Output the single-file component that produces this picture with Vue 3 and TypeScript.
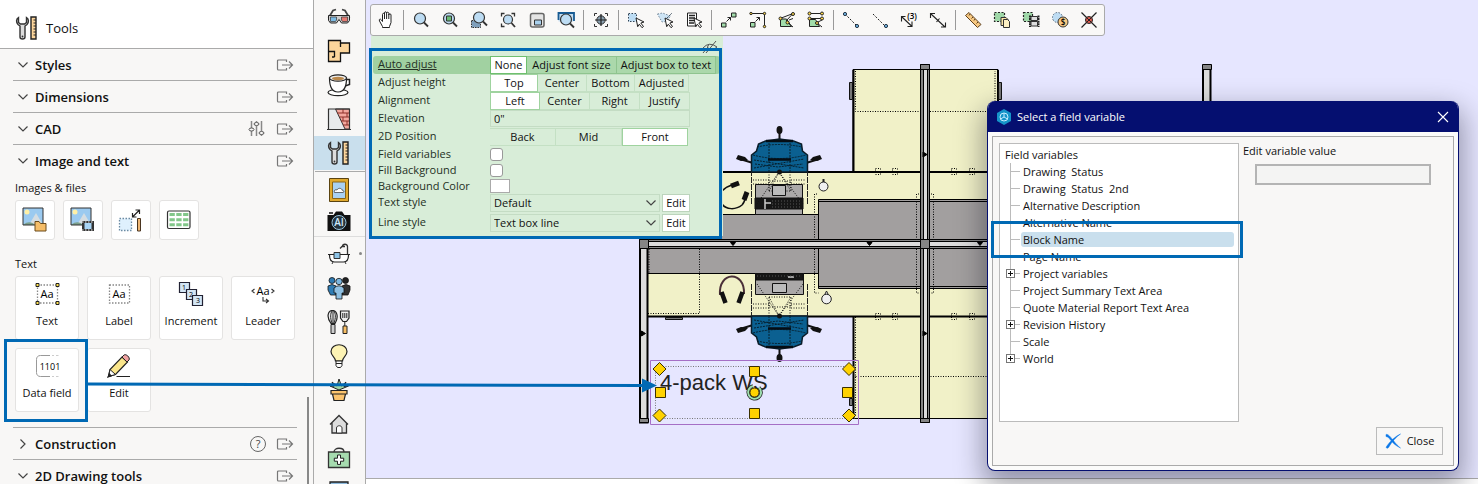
<script setup lang="ts">
import { ref } from 'vue'

interface Glyph { x: number; y: number; size: number; text: string; tint?: string }
interface Tool { id: string; label: string; glyphs?: Glyph[] }
interface Choice { label: string; options: string[]; width: number[]; value: string }

const railTop: Tool[] = [
  { id: 'glasses', label: '3D view' },
  { id: 'plan', label: 'Floor plan' },
  { id: 'cup', label: 'Accessories' },
  { id: 'wall', label: 'Walls' },
  { id: 'tools', label: 'Tools' },
]
const railMiddle: Tool[] = [
  { id: 'picture', label: 'Rendering' },
  { id: 'camera', label: 'AI camera', glyphs: [{ x: 12, y: 17, size: 10, text: 'AI', tint: '#cfe9fa' }] },
]
const railBottom: Tool[] = [
  { id: 'bath', label: 'Bathroom' },
  { id: 'people', label: 'People' },
  { id: 'kitchen', label: 'Kitchen' },
  { id: 'bulb', label: 'Lighting' },
  { id: 'plant', label: 'Plants' },
  { id: 'house', label: 'Building' },
  { id: 'medkit', label: 'Healthcare' },
  { id: 'screen', label: 'Screens' },
]

const imageTools: Tool[] = [
  { id: 'image-folder', label: 'Insert image' },
  { id: 'image-film', label: 'Insert film' },
  { id: 'image-scale', label: 'Scale image' },
  { id: 'sheet', label: 'Insert table' },
]
const textTools: Tool[] = [
  { id: 'text', label: 'Text', glyphs: [{ x: 13, y: 17, size: 11, text: 'Aa' }] },
  { id: 'label', label: 'Label', glyphs: [{ x: 13, y: 17, size: 11, text: 'Aa' }] },
  {
    id: 'increment',
    label: 'Increment',
    glyphs: [
      { x: 6, y: 9, size: 7, text: '1' },
      { x: 13, y: 16, size: 7, text: '2' },
      { x: 20, y: 22, size: 7, text: '3' },
    ],
  },
  { id: 'leader', label: 'Leader', glyphs: [{ x: 13, y: 14, size: 11, text: 'Aa' }] },
  { id: 'datafield', label: 'Data field', glyphs: [{ x: 16, y: 17, size: 9, text: '1101' }] },
  { id: 'pencil', label: 'Edit' },
]

const toolbar: Tool[][] = [
  [{ id: 'hand', label: 'Pan' }],
  [
    { id: 'zoom', label: 'Zoom' },
    { id: 'zoom-in', label: 'Zoom in' },
    { id: 'zoom-sel', label: 'Zoom window' },
    { id: 'zoom-all', label: 'Zoom all' },
    { id: 'zoom-page', label: 'Zoom page' },
    { id: 'zoom-prev', label: 'Previous zoom' },
  ],
  [{ id: 'center', label: 'Center view' }],
  [
    { id: 'select', label: 'Select' },
    { id: 'lasso', label: 'Lasso select' },
    { id: 'select-list', label: 'Select from list' },
  ],
  [
    { id: 'snap-a', label: 'Move' },
    { id: 'snap-b', label: 'Stretch' },
    { id: 'snap-c', label: 'Edit points' },
    { id: 'snap-d', label: 'Edit edges' },
  ],
  [
    { id: 'line', label: 'Line' },
    { id: 'line-mid', label: 'Line midpoint' },
    { id: 'dim-three', label: 'Divide', glyphs: [{ x: 15, y: 11, size: 8, text: '(3)' }] },
    { id: 'dim', label: 'Measure line' },
  ],
  [
    { id: 'ruler', label: 'Ruler' },
    { id: 'copy', label: 'Copy' },
    { id: 'copy-film', label: 'Animate' },
    { id: 'price', label: 'Price', glyphs: [{ x: 15, y: 17, size: 8, text: '$' }] },
    { id: 'cross', label: 'Delete' },
  ],
]

const choices = ref<Choice[]>([
  { label: 'Auto adjust', options: ['None', 'Adjust font size', 'Adjust box to text'], width: [37, 90, 99], value: 'None' },
  { label: 'Adjust height', options: ['Top', 'Center', 'Bottom', 'Adjusted'], width: [48, 49, 48, 54], value: 'Top' },
  { label: 'Alignment', options: ['Left', 'Center', 'Right', 'Justify'], width: [50, 50, 50, 50], value: 'Left' },
])
const position = ref('Front')
const elevation = ref('0"')
const fieldVariables = ref(false)
const fillBackground = ref(false)

const variables = [
  { name: 'Drawing  Status' },
  { name: 'Drawing  Status  2nd' },
  { name: 'Alternative Description' },
  { name: 'Alternative Name' },
  { name: 'Block Name' },
  { name: 'Page Name' },
  { name: 'Project variables', group: true },
  { name: 'Project Summary Text Area' },
  { name: 'Quote Material Report Text Area' },
  { name: 'Revision History', group: true },
  { name: 'Scale' },
  { name: 'World', group: true },
]
const selected = ref('Block Name')
</script>

<template>
  <div class="app">
    <svg class="sprite" aria-hidden="true">
      <symbol id="chevron-down" viewBox="0 0 12 12"><path d="M1.500 3.500 6 8l4.500-4.500" fill="none" stroke="#444" stroke-width="1.200" /></symbol>
      <symbol id="chevron-right" viewBox="0 0 12 12"><path d="M3.500 1.500 8 6l-4.500 4.500" fill="none" stroke="#444" stroke-width="1.200" /></symbol>
      <symbol id="export" viewBox="0 0 18 14"><path d="M10.500 4V2H2.500q-1 0-1 1v8q0 1 1 1h8v-2M6 7h10.500M13 3.500 16.500 7 13 10.500" fill="none" stroke="#777" stroke-width="1.200" /></symbol>
      <symbol id="sliders" viewBox="0 0 18 16"><path d="M3.500 0v7M3.500 10v5M8.500 0v1M8.500 5v10M13.500 0v10M13.500 13.500v1.500" stroke="#888" stroke-width="1.500" /><g fill="#f8f7f6" stroke="#555"><ellipse cx="3.500" cy="8.500" rx="2.500" ry="1.500" /><ellipse cx="8.500" cy="3" rx="2.500" ry="1.500" /><ellipse cx="13.500" cy="12" rx="2.500" ry="1.500" /></g></symbol>

      <symbol id="tools" viewBox="0 0 24 24">
        <path d="M3.500 1.500C1 3 1 6.500 3 8.500l2 1.500v11c0 2.600 5 2.600 5 0V10l2-1.500c2-2 2-5.500-.5-7v5L9.500 8h-4l-2-1.500z" fill="#ddd" stroke="#333" stroke-width="1.400" />
        <circle cx="7.500" cy="20.500" r=".9" fill="#333" />
        <path d="M16 1h5v22h-5z" fill="#fcd59b" stroke="#222" stroke-width="1.400" />
        <path d="M18.500 4H21M18.500 7H21M18.500 10H21M18.500 13H21M18.500 16H21M18.500 19H21" stroke="#222" />
      </symbol>
      <symbol id="glasses" viewBox="0 0 24 24"><path d="M1.500 13 6 5.500l3-1M22.500 13 18 5.500l-3-1" fill="none" stroke="#444" stroke-width="1.800" /><path d="M1.500 10.500h21v5l-2 2.500h-6L12 14.500 9.500 18h-6l-2-2.500z" fill="#ccc" stroke="#222" /><path d="M3.500 12h6v3l-1 1.500h-5z" fill="#7cbbe5" stroke="#333" stroke-width=".7" /><path d="M14.500 12h6v4.500h-5l-1-1.500z" fill="#e57a72" stroke="#333" stroke-width=".7" /></symbol>
      <symbol id="plan" viewBox="0 0 24 24"><path d="M1.500 1.500h12v2.500H22.500v10h-9V22.500h-12z" fill="#fcd59b" stroke="#111" stroke-width="1.300" /><path d="M13.500 4v4M7.500 18v-5.500h-6M7.500 18H5" fill="none" stroke="#111" stroke-width="1.300" /></symbol>
      <symbol id="cup" viewBox="0 0 24 24"><ellipse cx="11" cy="19.500" rx="10" ry="3.200" fill="#fff" stroke="#222" stroke-width="1.200" /><path d="M18 6.500h4.500v5L18 13" fill="#fff" stroke="#222" stroke-width="1.500" /><path d="M2.500 5c0 7 1 14 8.500 14s8.500-7 8.500-14z" fill="#fff" stroke="#222" stroke-width="1.200" /><ellipse cx="11" cy="5" rx="8.500" ry="3.200" fill="#eee" stroke="#222" stroke-width="1.200" /><ellipse cx="11" cy="5.500" rx="6" ry="1.800" fill="#bb894c" /></symbol>
      <symbol id="wall" viewBox="0 0 24 24"><path d="M1.500 2H9l9.500 20H1.500z" fill="#e8eaec" /><path d="M8.500 2h14v20h-4.500z" fill="#f3a89e" stroke="#333" /><path d="M10 6h12.500M12.500 10h10M14 14h8.500M16 18h6.500M16 2v4M20 6v4M16 10v4M20 14v4" stroke="#8d2f28" /><path d="M1.500 22V2h21v20M0 22.500h24" fill="none" stroke="#333" stroke-width="1.200" /></symbol>
      <symbol id="picture" viewBox="0 0 24 24"><path d="M2.500.5h19v23h-19z" fill="#e0a92e" stroke="#5a4310" /><path d="M5.500 4h13v16.500h-13z" fill="#a9d1f3" stroke="#8a6516" /><path d="M7.500 14.500c-1-2 1-3.500 2.500-2.500 1-2.500 5-2 5 .2 2-.2 2.500 2.300 1 2.300z" fill="#fff" stroke="#333" stroke-width=".7" /></symbol>
      <symbol id="camera" viewBox="0 0 24 24"><path d="M.5 6h6l2.500-3.500h6L17.500 6h6v16H.5z" fill="#111" /><path d="M2 4h4" stroke="#111" stroke-width="1.500" /><circle cx="12" cy="13.500" r="7" fill="#26343d" stroke="#9ac6df" /></symbol>
      <symbol id="bath" viewBox="0 0 24 24"><path d="M20.500 13V4.500c0-3-5-3-5 0M13 6.500l2-2h3" fill="none" stroke="#333" stroke-width="1.300" /><path d="M1 12.500h22M2.500 13c0 5 1.500 7 5 7h9c3.500 0 5-2 5-7" fill="#fff" stroke="#222" stroke-width="1.200" /><path d="M7 10.500h6v6H7z" fill="#8dc4e8" stroke="#333" /><path d="M6 20l-1 2M18 20l1 2" stroke="#333" /></symbol>
      <symbol id="people" viewBox="0 0 24 24"><g stroke="#111" stroke-width=".8"><circle cx="5" cy="4.500" r="3" fill="#2f7cb4" /><path d="M1 10q4-3 8 0v9H3.500L1 14z" fill="#2f7cb4" /><circle cx="18.500" cy="4.500" r="3" fill="#222" /><path d="M15 10q4-3 8 0v4l-2 5h-6z" fill="#333" /><circle cx="12" cy="5.500" r="3.200" fill="#7cb6de" /><path d="M7 12q5-4.500 10 0v5h-2v6H9v-6H7z" fill="#8fc0e2" /></g></symbol>
      <symbol id="kitchen" viewBox="0 0 24 24"><path d="M4 13.500C-1 7 1 .5 5.500.5S12 7 8 13.500z" fill="#eee" stroke="#222" stroke-width="1.200" /><path d="M5 13C3 8 3.500 3 5 1M7 13c2-5 1.500-10 0-12M6 1v12" fill="none" stroke="#222" /><path d="M4 14.500h4v9H4z" fill="#ccc" stroke="#222" /><path d="M13.500 1h8.500v7l-2.500 3.500h-3.500L13.500 8z" fill="#eee" stroke="#222" stroke-width="1.200" /><path d="M15.800 3v5M17.800 3v5M19.800 3v5M17.800 11v5" stroke="#222" /><path d="M16 16h4v7.500h-4z" fill="#f6bd63" stroke="#222" /></symbol>
      <symbol id="bulb" viewBox="0 0 24 24"><path d="M8.500 17c0-4-4.500-5-4.500-9.500C4-1.500 20-1.500 20 7.500c0 4.500-4.500 5.500-4.500 9.500z" fill="#fdf3b4" stroke="#222" stroke-width="1.200" /><path d="M9 17h6v4.500l-1.500 2h-3L9 21.500zM9 19.500h6" fill="#fff" stroke="#222" /></symbol>
      <symbol id="plant" viewBox="0 0 24 24"><path d="M12 12 3 8l4 .2L5 4l5 4 2-7 2.500 7L19 4l-2 4.500 4.500-.5z" fill="#9ed5a5" stroke="#222" /><path d="M4 12.500h16V16H4zM5.500 16h13L17 22.500H7z" fill="#fbc36d" stroke="#222" stroke-width="1.200" /></symbol>
      <symbol id="house" viewBox="0 0 24 24"><path d="M4.500 21V11.500L12 4l7.500 7.500V21z" fill="#ddd" /><path d="M3 12.500 12 3.500l9 9M5 11v10h14.500V11" fill="none" stroke="#333" stroke-width="1.300" /><path d="M9.500 21v-5c0-3 5.500-3 5.500 0v5z" fill="#fff" stroke="#333" /></symbol>
      <symbol id="medkit" viewBox="0 0 24 24"><path d="M7 6c0-5 10-5 10 0" fill="none" stroke="#333" stroke-width="1.300" /><path d="M1.500 6h21v15.500h-21z" fill="#a6dbaf" stroke="#333" stroke-width="1.300" /><path d="M10.500 9h3v3.200h3.200v3h-3.200v3.200h-3v-3.200H7.300v-3h3.200z" fill="#fff" stroke="#222" /></symbol>
      <symbol id="screen" viewBox="0 0 24 24"><path d="M3 2h18v16H3z" fill="#8db9dc" stroke="#222" stroke-width="1.300" /></symbol>

      <symbol id="landscape" viewBox="0 0 24 24"><path d="M1 1h20v17H1z" fill="#9bcaf0" /><path d="M7 18 14 6l7 12z" fill="#d5dde2" /><path d="M1 18c5-4 9-3 12 0z" fill="#7b9f8b" /><circle cx="5" cy="5" r="2.500" fill="#fff0a5" /><path d="M1 1h20v17H1z" fill="none" stroke="#333" /></symbol>
      <symbol id="image-folder" viewBox="0 0 26 26"><use href="#landscape" width="24" height="24" /><path d="M13 14.500h4l1.500 2H24V24H13z" fill="#f5bd68" stroke="#6b4b1b" /></symbol>
      <symbol id="image-film" viewBox="0 0 26 26"><use href="#landscape" width="24" height="24" /><path d="M12 14h12v10H12z" fill="#333" /><path d="M14.500 16h7v6h-7z" fill="#a9d5f5" /><path d="M12 15h12M12 23h12" stroke="#eee" stroke-dasharray="1.500 1.500" /></symbol>
      <symbol id="image-scale" viewBox="0 0 26 26"><path d="M1.500 11.500h12v12h-12z" fill="#dff0fd" stroke="#6d8ba3" stroke-dasharray="1.500 1.500" stroke-width="1.300" /><path d="m15 9.500 6-6M17.500 3H21.500V7M14.500 6V10H18.500" fill="none" stroke="#222" stroke-width="1.200" /><path d="M19.500 11.500h3v12.500h-3z" fill="#f0b876" stroke="#4a3520" /></symbol>
      <symbol id="sheet" viewBox="0 0 26 26"><rect x="1.500" y="4" width="22.500" height="17.500" rx="1.500" fill="#fff" stroke="#333" stroke-width="1.200" /><path d="M3.500 7.500h19M3.500 12.700h19M3.500 17.800h19" stroke="#83c78a" stroke-width="3" stroke-dasharray="5.300 1.500" /></symbol>
      <symbol id="text" viewBox="0 0 26 26"><path d="M3.500 4h20v18h-20z" fill="none" stroke="#888" stroke-dasharray="1.500 1.500" stroke-width="1.300" /><path d="M2 2.500h3v3H2zM22 2.500h3v3h-3zM2 20.500h3v3H2zM22 20.500h3v3h-3z" fill="#ffe14d" stroke="#222" /></symbol>
      <symbol id="label" viewBox="0 0 26 26"><path d="M3.500 4h20v18h-20z" fill="none" stroke="#888" stroke-dasharray="1.500 1.500" stroke-width="1.300" /></symbol>
      <symbol id="increment" viewBox="0 0 26 26"><g fill="#d3e6f5" stroke="#223" stroke-width="1.200"><path d="M1.500 1.500h10v10h-10z" /><path d="M8.500 8.500h10v10h-10z" /><path d="M14.500 14.500h10v10h-10z" /></g></symbol>
      <symbol id="leader" viewBox="0 0 26 26"><path d="M4.500 8 2 10l2.500 2M21.500 8 24 10l-2.500 2" fill="none" stroke="#333" stroke-width="1.100" /><path d="M13 16v4h5M16 18l2.500 2-2.500 2" fill="none" stroke="#333" stroke-width="1.100" /></symbol>
      <symbol id="datafield" viewBox="0 0 26 26"><path d="M16 2.500H6.500C4 2.500 2.500 4 2.500 6.500v13c0 2.500 1.500 4 4 4H16" fill="none" stroke="#999" /><path d="M18 2.500h2M22 2.500h2.500M18 23.500h2M22 23.500h2.500" stroke="#ccc" /></symbol>
      <symbol id="pencil" viewBox="0 0 26 26"><path d="m2.500 23.500 1.500-7L16 4l5.500 5L9.500 21.500z" fill="#fbe68b" stroke="#222" stroke-width="1.200" /><path d="m16 4 2-2c2-1.500 6.500 2.500 5 5l-2 2z" fill="#f2a3a3" stroke="#222" /><path d="m2.500 23.500 1.500-7 5.500 5z" fill="#fff" stroke="#222" /><path d="m2 24 1.500-3 1.500 2zM10.500 23.500H24" fill="#222" stroke="#222" stroke-width="1.200" /></symbol>

      <symbol id="hand" viewBox="0 0 24 24"><path d="M8.500 18.500 5.500 13c-1-2 1-2.500 2-1l1 1.500V6.500c0-1.600 2-1.600 2 0V5c0-1.700 2-1.700 2 0v.5c0-1.700 2.300-1.700 2.300 0V7c0-1.600 2.200-1.600 2.200 0v7.500l-1.500 4v1h-7z" fill="#fff" stroke="#222" /><path d="M10.500 6v5M12.600 5.500V11M14.800 6.500V11" stroke="#222" /></symbol>
      <symbol id="lens" viewBox="0 0 24 24"><circle cx="11" cy="10.500" r="5.500" fill="#bddcf3" stroke="#333" stroke-width="1.200" /><path d="m15 14.500 4 4" stroke="#333" stroke-width="1.800" /></symbol>
      <symbol id="zoom" viewBox="0 0 24 24"><use href="#lens" width="24" height="24" /></symbol>
      <symbol id="zoom-in" viewBox="0 0 24 24"><use href="#lens" width="24" height="24" /><path d="M8.500 8h5v5h-5z" fill="#6bbd75" stroke="#333" /></symbol>
      <symbol id="zoom-sel" viewBox="0 0 24 24"><path d="M4.500 12.500h9v7h-9z" fill="#7f9fbb" stroke="#333" stroke-dasharray="1.500 1" /><use href="#lens" x="1" y="-1" width="24" height="24" /></symbol>
      <symbol id="zoom-all" viewBox="0 0 24 24"><circle cx="12" cy="11.500" r="4.500" fill="#bddcf3" stroke="#333" stroke-width="1.200" /><path d="m15.500 15 3.500 4" stroke="#333" stroke-width="1.800" /><path d="M5.500 8.500v-3h3M15.500 5.500h3v3M5.500 15.500v3h3" fill="none" stroke="#333" stroke-width="1.300" /></symbol>
      <symbol id="zoom-page" viewBox="0 0 24 24"><rect x="5.500" y="5.500" width="13.500" height="13.500" rx="2" fill="#e4e4e4" stroke="#666" stroke-width="1.500" /><path d="M9.500 12h7v5h-7z" fill="#a9d0ed" stroke="#333" /></symbol>
      <symbol id="zoom-prev" viewBox="0 0 24 24"><path d="M4.500 5.500h15v8h-15z" fill="#c4ddf0" /><path d="M4.500 12V5h15.500v8" fill="none" stroke="#185b93" stroke-width="1.800" /><use href="#lens" x="1" y="1" width="24" height="24" /></symbol>
      <symbol id="center" viewBox="0 0 24 24"><circle cx="12" cy="12" r="4.200" fill="#8aa0b0" stroke="#333" /><path d="M12 6v12M6 12h12" stroke="#222" stroke-width="1.200" /><path d="M5.500 8V5.500H8M16 5.500h2.500V8M5.500 16v2.500H8M16 18.500h2.500V16" fill="none" stroke="#333" /></symbol>
      <symbol id="pointer" viewBox="0 0 24 24"><path d="m12 10 8 4-3.200 1 2.700 3.500-1.500 1.200-2.700-3.500-1.600 2.500z" fill="#fff" stroke="#222" /></symbol>
      <symbol id="select" viewBox="0 0 24 24"><path d="M4.500 5.500h8v8h-8z" fill="#bcdcf4" stroke="#345" stroke-dasharray="1.500 1.500" /><use href="#pointer" width="24" height="24" /></symbol>
      <symbol id="lasso" viewBox="0 0 24 24"><path d="m4.500 6 5-1 8 3-4.500 5.500-4 .5z" fill="#cde4f5" stroke="#789" stroke-dasharray="1.500 1.500" /><path d="m12 12 7-7" stroke="#345" stroke-dasharray="2 1" /><use href="#pointer" width="24" height="24" /></symbol>
      <symbol id="select-list" viewBox="0 0 24 24"><path d="M5.500 5h9v13h-9z" fill="#fff" stroke="#222" /><path d="M7 7.500h6M7 10h6M7 12.500h5M7 15h5" stroke="#222" stroke-width="1.500" /><use href="#pointer" width="24" height="24" /></symbol>
      <symbol id="snap-a" viewBox="0 0 24 24"><path d="M4.500 15h4.500v4H4.500zM14.500 5H19v4h-4.500z" fill="#a1dcaa" stroke="#222" /><path d="m9.500 13.500 4-4M10.500 9.500h3v3" fill="none" stroke="#222" /></symbol>
      <symbol id="snap-b" viewBox="0 0 24 24"><path d="M4.500 5.500h14v13" fill="none" stroke="#222" /><path d="M4.500 14.500h4.500v4.500H4.500z" fill="#a1dcaa" stroke="#222" /><path d="m9.500 13.500 4-4M10.500 9.500h3v3" fill="none" stroke="#222" /><g fill="#ffd84a" stroke="#222"><circle cx="5" cy="5.500" r="1.200" /><circle cx="18.500" cy="5.500" r="1.200" /><circle cx="18.500" cy="18.500" r="1.200" /></g></symbol>
      <symbol id="snap-c" viewBox="0 0 24 24"><path d="M5.500 11h6l2 3 3 4.500H5.500z" fill="#a1dcaa" stroke="#222" /><path d="m5 10.500 13-5-7 7.500M13 15l5 4M14 12l4-1.500" fill="none" stroke="#222" /><g fill="#ffd84a" stroke="#222"><circle cx="5.500" cy="10.500" r="1.500" /><circle cx="18" cy="6" r="1.500" /><circle cx="12.500" cy="14.500" r="1.500" /></g></symbol>
      <symbol id="snap-d" viewBox="0 0 24 24"><path d="M5.500 11.500h6l4 7h-10z" fill="#a1dcaa" stroke="#222" /><path d="M6 5.500h12M6 10.500h12M13 15l5 4M14 14l4-2" fill="none" stroke="#222" /><g fill="#ffd84a" stroke="#222"><circle cx="5.500" cy="5.500" r="1.500" /><circle cx="18" cy="5.500" r="1.500" /><circle cx="5.500" cy="10.500" r="1.500" /><circle cx="18" cy="10.500" r="1.500" /><circle cx="13" cy="15" r="1.500" /></g></symbol>
      <symbol id="line" viewBox="0 0 24 24"><path d="m6 6 12 12" stroke="#222" stroke-dasharray="2 1.500" /><g fill="#73b6e4" stroke="#234"><circle cx="6" cy="6" r="1.600" /><circle cx="18" cy="18" r="1.600" /></g></symbol>
      <symbol id="line-mid" viewBox="0 0 24 24"><path d="m5 6 12 12" stroke="#222" stroke-dasharray="2 1.500" /><circle cx="18" cy="18" r="1.600" fill="#73b6e4" stroke="#234" /></symbol>
      <symbol id="dim-three" viewBox="0 0 24 24"><path d="m5 9 9.500 9M4.500 13.500V8.500h4M10.500 18.500h4.500v-5" fill="none" stroke="#222" stroke-width="1.100" /></symbol>
      <symbol id="dim" viewBox="0 0 24 24"><path d="m5 6 14 13M4.500 10V5.500H9M15 19h4.500v-4.500M10.500 14l3-3.500" fill="none" stroke="#222" stroke-width="1.100" /></symbol>
      <symbol id="ruler" viewBox="0 0 24 24"><path d="m4.500 7.500 3.500-3 12 12-3.500 3z" fill="#f8c982" stroke="#5c3f1d" /><path d="m9 6-1 1.500M12 9l-1.500 1.500M14 11l-1 1.500M17 14l-1.500 1.500" stroke="#5c3f1d" /></symbol>
      <symbol id="copy" viewBox="0 0 24 24"><path d="M4.500 4.500h10v9h-10z" fill="#9fd8a8" stroke="#222" stroke-dasharray="2 1.500" stroke-width="1.200" /><path d="M11 9.500h5l2 2v6h-7z" fill="#fbe6a9" stroke="#333" /><path d="M13.500 11.500h4l2 2v6h-6z" fill="#fdf0c4" stroke="#333" /></symbol>
      <symbol id="copy-film" viewBox="0 0 24 24"><path d="M4.500 4.500h9v9h-9z" fill="#9fd8a8" stroke="#222" stroke-dasharray="2 1.500" stroke-width="1.200" /><path d="M11 7.500v11.500M19.500 7.500v11.500" stroke="#222" stroke-width="2" stroke-dasharray="2 .6" /><path d="M12 8.500h6.500v4H12zM12 13.500h6.500V18H12z" fill="#ddd" stroke="#333" /></symbol>
      <symbol id="price" viewBox="0 0 24 24"><circle cx="9.500" cy="9.500" r="5" fill="#bddcf3" stroke="#567" stroke-dasharray="1.500 1.500" /><circle cx="15" cy="14" r="5" fill="#f8c982" stroke="#333" /></symbol>
      <symbol id="cross" viewBox="0 0 24 24"><path d="m4.500 4.500 15 15M19.500 4.500l-15 15" stroke="#222" stroke-width="1.200" /><circle cx="12" cy="12" r="3.500" fill="#dc5a4e" stroke="#222" /><path d="m9.500 9.500 5 5M14.500 9.500l-5 5" stroke="#222" /></symbol>

      <symbol id="chair" viewBox="735 300 92 64" overflow="visible">
        <path d="M753 325 740 329M806 325l13 4" stroke="#111" stroke-width="2" />
        <path d="m736 329 5-2 7 1-3 3-7 2zM822 329l-5-2-7 1 3 3 7 2z" fill="#111" />
        <path d="M779.500 347v11" stroke="#111" stroke-width="2" />
        <ellipse cx="779.500" cy="358" rx="3" ry="4" fill="#111" />
        <path d="M751.500 316h56v17l-5 4-1 7-8 3-14 2-14-2-7-3-2-7-5-4z" fill="#0b6091" stroke="#0b1c28" stroke-width="1.500" />
        <path d="M753 333q26-7 53 0M757 341q22 5 45 0M755 324l23-3 25 3M769 316v32M790 316v32M754 328l50-8M754 320l50 9" fill="none" stroke="#06202f" stroke-dasharray="2 1" />
        <path d="M768 328.500h23M766 347h27" stroke="#050d14" stroke-width="2.500" />
        <path d="M751.500 284v32M807.500 284v32" stroke="#222" stroke-dasharray="6 1" />
        <path d="m757 284 22 32 24-32M769 297h22v10h-22zM769 297l10 19 12-19M753 304h16M791 304h15M753 308h16M791 308h15M769 316v-15M790 316v-15" fill="none" stroke="#111" stroke-dasharray="1 1.500" />
        <circle cx="779.500" cy="316" r="2.500" fill="#111" />
      </symbol>
    </svg>

    <aside class="panel">
      <header class="panel-head">
        <svg class="i24"><use href="#tools" /></svg>
        <span>Tools</span>
      </header>
      <div class="panel-body">
        <section v-for="name in ['Styles', 'Dimensions', 'CAD']" :key="name" class="section ruled">
          <button class="fold"><svg class="i12"><use href="#chevron-down" /></svg>{{ name }}</button>
          <button v-if="name === 'CAD'" class="act" aria-label="CAD settings"><svg class="i-sliders"><use href="#sliders" /></svg></button>
          <button class="act" :aria-label="'Detach ' + name"><svg class="i-export"><use href="#export" /></svg></button>
        </section>
        <section class="section">
          <button class="fold"><svg class="i12"><use href="#chevron-down" /></svg>Image and text</button>
          <button class="act" aria-label="Detach Image and text"><svg class="i-export"><use href="#export" /></svg></button>
        </section>
        <div class="group">
          <h3>Images &amp; files</h3>
          <div class="tiles small">
            <button v-for="t in imageTools" :key="t.id" class="tile" :aria-label="t.label"><svg class="i26"><use :href="'#' + t.id" /></svg></button>
          </div>
          <h3 class="second">Text</h3>
          <div class="tiles">
            <button v-for="t in textTools" :key="t.id" class="tile">
              <svg class="i26" aria-hidden="true">
                <use :href="'#' + t.id" />
                <text v-for="g in t.glyphs" :key="g.text" class="glyph" :x="g.x" :y="g.y" :font-size="g.size">{{ g.text }}</text>
              </svg>
              <span>{{ t.label }}</span>
            </button>
          </div>
        </div>
        <section class="section ruled">
          <button class="fold"><svg class="i12"><use href="#chevron-right" /></svg>Construction</button>
          <button class="help" aria-label="Help">?</button>
          <button class="act" aria-label="Detach Construction"><svg class="i-export"><use href="#export" /></svg></button>
        </section>
        <section class="section">
          <button class="fold"><svg class="i12"><use href="#chevron-down" /></svg>2D Drawing tools</button>
          <button class="act" aria-label="Detach 2D Drawing tools"><svg class="i-export"><use href="#export" /></svg></button>
        </section>
        <div class="scroll-thumb"></div>
      </div>
    </aside>

    <nav class="rail">
      <button v-for="t in railTop" :key="t.id" :class="{ on: t.id === 'tools' }" :aria-label="t.label"><svg class="i24"><use :href="'#' + t.id" /></svg></button>
      <hr>
      <button v-for="t in railMiddle" :key="t.id" class="short" :aria-label="t.label">
        <svg class="i24">
          <use :href="'#' + t.id" />
          <text v-for="g in t.glyphs" :key="g.text" class="glyph strong" :x="g.x" :y="g.y" :font-size="g.size" :fill="g.tint">{{ g.text }}</text>
        </svg>
      </button>
      <div class="rail-more">
        <button v-for="t in railBottom" :key="t.id" :aria-label="t.label"><svg class="i24"><use :href="'#' + t.id" /></svg><i v-if="t.id === 'bath'" class="dot"></i></button>
      </div>
    </nav>

    <main class="canvas">
      <svg class="drawing" width="1112" height="484" viewBox="366 0 1112 484" role="img" aria-label="Workstation floor plan">
        <g fill="#f1f1c8">
          <path d="M853 69.500h145V172H853zM643 172h355v68H643zM648 248h350v68H648zM853 316h145v102.500H853z" />
        </g>
        <g fill="#a29f9f">
          <path d="M643 214.500h175V240H643zM818.500 199.500H998V240H818.500zM648 248h170.500v25.500H648zM818.500 248H998v40.500H818.500z" />
        </g>
        <g fill="none" stroke="#000">
          <path d="M853 172V69.500h145V172M818.500 240v-40.500H998M818.500 201.500H998M643 214.500h175M648 273.500h170.500v-25M818.500 273v15.500H998M818.500 286.500H998M853 418.500h145" />
          <path d="M643 172h355M648 316.500h350M853.500 70v102M853.500 316v103M998 70v102" stroke-width="2" />
          <path d="M855.500 71v40.500H995V71M855.500 376.500H998M855.500 317v100M649 249v24M699.500 249v64.500H648M814.500 249v44h4M916.500 249v44h4M933.500 249v44h-4M814.500 240v-46h4M916.500 240v-46h4M933.500 240v-46h-4" stroke-dasharray="1 1.500" />
          <path d="M875.500 168.500h5v6h-5zM892.500 168.500h5v6h-5zM951.500 168.500h5v6h-5zM969.500 168.500h5v6h-5zM875.500 313.500h5v6h-5zM892.500 313.500h5v6h-5zM951.500 313.500h5v6h-5zM969.500 313.500h5v6h-5z" stroke-dasharray="1 1.500" />
        </g>
        <g fill="#777" stroke="#111">
          <path d="M849.500 82.500h3v17h-3zM998.500 82.500h3v17h-3zM665.500 317.500h17v2h-17zM849.500 398.500h3v7h-3z" />
        </g>

        <g fill="none" stroke="#111">
          <path d="M722 191c3-3 6-5 10-6M722 204c4 6 14 6 20 1 2-2 3-4 3-8" stroke-width="1.500" />
          <path d="m731 186 8-3M744 200l3-8" stroke-width="5" />
          <path d="M720 295c-2-24 25-25 24-1" stroke="#4a3038" stroke-width="2" />
          <path d="m721.500 292 4 11M742.500 292l-4 11" stroke-width="4.500" />
        </g>
        <g fill="#f0f0f0" stroke="#222">
          <path d="M823.500 179v4" stroke-width="2" /><circle cx="823.500" cy="186.500" r="4.500" />
          <path d="m826.500 291 2 4h-4z" /><circle cx="826.500" cy="299" r="4.800" />
        </g>

        <g stroke="#111">
          <path d="M755.500 184.500h47v30h-47zM755.500 273.500h48v21h-48z" fill="#aaa8a8" />
          <path d="M755 198h48v11h-48zM756 273.500h47v6.500h-47z" fill="#161616" />
          <path d="M765 199v10M765 203h6M788 277h6" stroke="#ccc" stroke-width="1.500" />
          <path d="M772 201h29M772 204h29M772 207h29M757 276h44" stroke="#555" stroke-dasharray="1 2" />
        </g>
        <use href="#chair" x="735" y="300" width="92" height="64" />
        <use href="#chair" x="735" y="300" width="92" height="64" transform="matrix(1 0 0 -1 0 488)" />
        <path d="M772.500 185.500h13v10h-13zM772.500 283.500h14v9h-14z" fill="#bbb" stroke="#111" />

        <g stroke="#000">
          <path d="M643 239.500h355v9H643z" fill="#858585" />
          <path d="M643 241.500h355v5H643z" fill="#dcdcdc" />
          <path d="M920.500 64.500h9v358h-9z" fill="#858585" />
          <path d="M923.500 69.500h4v349h-4z" fill="#dcdcdc" />
          <path d="M640 240h7.500v182.500H640z" fill="#dcdcdc" stroke-width="2" />
          <path d="M1203 69h7.500v45h-7.500z" fill="#dcdcdc" stroke-width="2" />
          <path d="M639.500 239.500h9v9h-9zM639.500 418.500h9v4h-9zM920.500 64.500h9v5h-9zM920.500 239.500h9v9h-9zM920.500 418.500h9v4h-9zM1202.500 64.500h9v5h-9z" fill="#858585" />
          <path d="M730.500 242.500h5l-2.500 3zM867 242.500h5l-2.500 3zM977.500 242.500h5l-2.500 3zM923 152l4 2.500-4 2.500zM923 331l4 2.500-4 2.500zM641.500 331l4 2.500-4 2.500z" />
        </g>

        <path d="M650.500 360.500h208v64h-208z" fill="none" stroke="#a56fc6" />
        <path d="M655.500 366.500h199v52h-199z" fill="none" stroke="#777" stroke-dasharray="1 1.500" />
        <text x="660" y="390" font-family="Liberation Sans, Arial, sans-serif" font-size="22" fill="#222">4-pack WS</text>
        <path d="M759 387.500a6.500 6.500 0 1 1-6-1.500" fill="none" stroke="#222" stroke-width="3.500" />
        <path d="M759 387.500a6.500 6.500 0 1 1-6-1.500" fill="none" stroke="#9fe0b0" stroke-width="2" />
        <g fill="#ffd200" stroke="#3a3000">
          <path d="m659.500 362.500 6.500 6.500-6.500 6.500L653 369zM849 362.500l6.500 6.500-6.500 6.500-6.500-6.500zM659.500 409l6.500 6.500-6.500 6.500-6.500-6.500zM849 409l6.500 6.500-6.500 6.500-6.500-6.500z" />
          <path d="M749.500 366.500h10v10h-10zM655.500 387.500h10v10h-10zM842.500 387.500h10v10h-10zM749.500 408.500h10v10h-10z" />
          <circle cx="754.500" cy="392.500" r="4.500" />
        </g>
      </svg>

      <div class="statusbar"></div>

      <div class="overlay">
        <div class="toolbar" role="toolbar" aria-label="View tools">
          <template v-for="(group, gi) in toolbar" :key="gi">
            <span v-if="gi" class="sep"></span>
            <button v-for="t in group" :key="t.id" :aria-label="t.label">
              <svg class="i24">
                <use :href="'#' + t.id" />
                <text v-for="g in t.glyphs" :key="g.text" class="glyph strong" :x="g.x" :y="g.y" :font-size="g.size">{{ g.text }}</text>
              </svg>
            </button>
          </template>
        </div>

        <form class="props" @submit.prevent>
          <div class="props-top">
            <button type="button" aria-label="Hide properties">
              <svg width="18" height="14" viewBox="0 0 18 14"><path d="M2 8q6-7 14-1-6 6-14 1M8 4q-3 3 0 6M5 13 15 1M2 13 7 7" fill="none" stroke="#555" /></svg>
            </button>
          </div>
          <div v-for="(c, i) in choices" :key="c.label" class="row" :class="{ active: i === 0 }">
            <span class="name">{{ c.label }}</span>
            <button v-for="(o, k) in c.options" :key="o" type="button" class="seg" :class="{ on: c.value === o }" :style="{ width: c.width[k] + 'px' }" :aria-pressed="c.value === o" @click="c.value = o">{{ o }}</button>
          </div>
          <div class="row">
            <label class="name" for="elevation">Elevation</label>
            <input id="elevation" v-model="elevation" class="field" type="text">
          </div>
          <div class="row">
            <span class="name">2D Position</span>
            <button v-for="o in ['Back', 'Mid', 'Front']" :key="o" type="button" class="seg third" :class="{ on: position === o }" :aria-pressed="position === o" @click="position = o">{{ o }}</button>
          </div>
          <div class="row low">
            <label class="name" for="field-vars">Field variables</label>
            <input id="field-vars" v-model="fieldVariables" class="check" type="checkbox">
          </div>
          <div class="row low">
            <label class="name" for="fill-bg">Fill Background</label>
            <input id="fill-bg" v-model="fillBackground" class="check" type="checkbox">
          </div>
          <div class="row low">
            <span class="name">Background Color</span>
            <button type="button" class="swatch" aria-label="Background Color"></button>
          </div>
          <div class="row pick">
            <label class="name" for="text-style">Text style</label>
            <span class="combo"><select id="text-style"><option>Default</option></select><svg class="i12"><use href="#chevron-down" /></svg></span>
            <button type="button" class="edit">Edit</button>
          </div>
          <div class="row pick">
            <label class="name" for="line-style">Line style</label>
            <span class="combo"><select id="line-style"><option>Text box line</option></select><svg class="i12"><use href="#chevron-down" /></svg></span>
            <button type="button" class="edit">Edit</button>
          </div>
        </form>
      </div>

      <div class="dialog" role="dialog" aria-labelledby="dialog-title">
        <header>
          <svg width="16" height="18" viewBox="0 0 16 18"><path d="m8 1 7 4v8l-7 4-7-4V5z" fill="#1593c9" /><circle cx="8" cy="9" r="4" fill="none" stroke="#c5ecff" /><path d="M8 5v4l-3.500 2M8 9l3.500 2" fill="none" stroke="#c5ecff" /></svg>
          <h2 id="dialog-title">Select a field variable</h2>
          <button class="x" aria-label="Close window"><svg width="12" height="12" viewBox="0 0 12 12"><path d="m1 1 10 10M11 1 1 11" stroke="#fff" stroke-width="1.100" /></svg></button>
        </header>
        <div class="dialog-body">
          <div class="frame">
            <div class="cols">
              <div class="tree">
                <div class="root">Field variables</div>
                <ul role="tree">
                  <li v-for="v in variables" :key="v.name" role="treeitem" :aria-selected="selected === v.name" @click="selected = v.name">
                    <button v-if="v.group" class="expand" :aria-label="'Expand ' + v.name"></button>
                    <span :class="{ picked: selected === v.name }">{{ v.name }}</span>
                  </li>
                </ul>
              </div>
              <div class="value">
                <label for="variable-value">Edit variable value</label>
                <input id="variable-value" type="text">
              </div>
            </div>
            <div class="foot">
              <button class="close">
                <svg width="16" height="16" viewBox="0 0 16 16"><path d="M1 1.500c1.500-.5 3 .5 7 5.500 3 4 5 6 7.500 8C11 13 8 10 6 7.500 4 5 2.500 3.500 1 3.500zM15.500 1C11 4 7.500 8 3.500 14.500 2.500 16 .5 15 1.500 13.500 5 8.500 10 3.500 15.500 1z" fill="#0d78e8" stroke="#0d78e8" stroke-width=".5" /></svg>
                Close
              </button>
            </div>
          </div>
        </div>
      </div>
    </main>

    <svg class="marks" aria-hidden="true">
      <g fill="none" stroke="#0069b4" stroke-width="3">
        <path d="M5.500 340.500h81v80h-81zM370.500 49.500h350v188h-350zM992.500 222.500h249v34h-249z" />
        <path d="M88 384 644 385.500" />
      </g>
      <path d="m642 378.500 15 7-15 7z" fill="#0069b4" />
    </svg>
  </div>
</template>

<style>
body { margin: 0; }
</style>

<style scoped>
.app { position: relative; display: flex; height: 100vh; overflow: hidden; background: #fff; color: #111; font: 11px/16px "Open Sans", "Noto Sans", sans-serif; }
.app * { box-sizing: border-box; }
.sprite { position: absolute; width: 0; height: 0; }
svg { flex: none; display: block; }
button, input, select { font: inherit; color: inherit; margin: 0; padding: 0; border: 0; background: none; border-radius: 0; }
h2, h3 { margin: 0; font: inherit; }
.i12 { width: 12px; height: 12px; }
.i24 { width: 24px; height: 24px; }
.i26 { width: 26px; height: 26px; }
.i-export { width: 18px; height: 14px; }
.i-sliders { width: 18px; height: 16px; }
.glyph { text-anchor: middle; }
.strong { font-weight: 600; }

.panel { flex: none; width: 313px; display: flex; flex-direction: column; background: #f8f7f6; }
.panel-head { flex: none; display: flex; align-items: center; gap: 7px; height: 49px; padding: 8px 15px 0; background: #fff; border-bottom: 1px solid #aaa; font-size: 13px; }
.panel-body { position: relative; flex: 1; min-height: 0; overflow: hidden; padding: 0 16px 0 13px; }
.section { display: flex; align-items: center; gap: 10px; height: 32px; padding-right: 3px; }
.ruled { border-bottom: 1px solid #aaa; }
.fold { flex: 1; display: flex; align-items: center; gap: 6px; padding-left: 4px; text-align: left; font-size: 13px; font-weight: 600; line-height: 18px; }
.help { width: 16px; height: 16px; border: 1px solid #666; border-radius: 50%; line-height: 14px; text-align: center; color: #444; }
.group { padding: 3px 0 15px 2px; border-bottom: 1px solid #aaa; }
.group h3 { margin-bottom: 4px; line-height: 16px; }
.group .second { margin-top: 16px; }
.tiles { display: flex; flex-wrap: wrap; gap: 8px; }
.tile { display: flex; flex-direction: column; align-items: center; gap: 6px; width: 64px; height: 64px; padding-top: 4px; background: #fff; border: 1px solid #e4e3e2; border-radius: 3px; }
.small .tile { width: 40px; height: 40px; padding: 6px; }
.scroll-thumb { position: absolute; right: 4px; top: 348px; bottom: 0; width: 2px; background: #888; }

.rail { flex: none; width: 53px; display: flex; flex-direction: column; background: #f8f7f6; border-left: 1px solid #aaa; border-right: 1px solid #aaa; }
.rail button { position: relative; flex: none; display: flex; align-items: center; justify-content: center; width: 100%; height: 34px; padding-right: 2px; }
.rail .on { background: #c9dfed; }
.rail .short { height: 31px; }
.rail hr { flex: none; width: 50px; height: 1px; margin: 1px auto 2px; border: 0; background: #aaa; }
.rail-more { border-top: 1px solid #ddd; }
.dot { position: absolute; right: 3px; top: 15px; width: 3px; height: 3px; border-radius: 50%; background: #888; }

.canvas { position: relative; flex: 1; min-width: 0; overflow: hidden; background: #e6e6ff; }
.drawing { position: absolute; left: 0; top: 0; }
.statusbar { position: absolute; left: 0; right: 0; bottom: 0; height: 6px; background: #fff; border-top: 1px solid #aaa; }
.overlay { position: relative; display: flex; flex-direction: column; align-items: flex-start; padding: 4px; }
.toolbar { display: flex; align-items: center; gap: 5px; height: 32px; padding: 0 3px; background: #f9f8f7; border: 1px solid #aaa; border-radius: 3px; }
.sep { width: 1px; height: 20px; background: #999; }

.props { width: 352px; padding: 0 3px 2px 2px; margin-left: 1px; background: #d8edd8; }
.props-top { display: flex; justify-content: flex-end; height: 20px; padding: 4px 1px 0; }
.props-top button { height: 14px; }
.row { display: flex; align-items: flex-start; height: 18px; padding-left: 5px; }
.row.active { background: #a1d1a1; border-radius: 3px; }
.active .name { text-decoration: underline; }
.name { width: 112px; color: #243024; }
.row.low { align-items: center; height: 16px; }
.row.pick { height: 20px; }
.seg { height: 18px; line-height: 15px; padding-bottom: 1px; border: 1px solid #c4e0c4; border-left-width: 0; white-space: nowrap; }
.active .seg { border-color: #8fc48f; background: #abd8ab; }
.active .seg.on { background: #fff; border-color: #6fbf6f; }
.seg.on { background: #fff; border: 1px solid #9fd39f; }
.third { width: 66px; }
.field { width: 200px; height: 17px; padding: 0 3px 1px; border: 1px solid #c4dcc4; }
.check { appearance: none; width: 13px; height: 13px; background: #fff; border: 1px solid #999; border-radius: 3px; }
.swatch { width: 20px; height: 14px; background: #fff; border: 1px solid #aaa; }
.combo { position: relative; width: 170px; height: 18px; margin-right: 2px; }
.combo select { appearance: none; width: 100%; height: 18px; padding: 0 3px 1px; border: 1px solid #c4dcc4; }
.combo svg { position: absolute; right: 3px; top: 3px; pointer-events: none; }
.edit { width: 28px; height: 18px; line-height: 15px; padding-bottom: 1px; background: #fff; border: 1px solid #bcd4bc; }

.dialog { position: absolute; left: 621px; top: 101px; width: 472px; background: #fbfbfa; border: 1px solid #050f70; border-top: 0; border-radius: 8px; overflow: hidden; box-shadow: 0 12px 28px 4px rgba(0, 0, 20, 0.36); }
.dialog header { display: flex; align-items: center; gap: 5px; height: 31px; padding: 0 9px 0 8px; background: #050f70; color: #fff; }
.dialog h2 { flex: 1; font-size: 11px; }
.dialog-body { padding: 4px; }
.frame { padding: 6px 10px 10px 6px; background: #f8f7f6; border: 1px solid #aaa; }
.cols { display: flex; gap: 4px; }
.tree { width: 240px; min-height: 279px; padding: 2px 4px 3px 5px; background: #fff; border: 1px solid #bbb; }
.root { line-height: 17px; }
.tree ul { position: relative; list-style: none; margin: 0; padding: 0 0 0 6px; }
.tree ul::before { content: ""; position: absolute; left: 5px; top: 0; bottom: 8px; width: 1px; background: #bbb; }
.tree li { position: relative; display: flex; align-items: center; height: 17px; padding-left: 10px; }
.tree li::before { content: ""; position: absolute; left: 0; top: 8px; width: 9px; height: 1px; background: #bbb; }
.tree span { flex: 1; padding-left: 2px; line-height: 15px; white-space: pre; border-radius: 3px; }
.tree .picked { background: #c9dfed; }
.expand { position: absolute; left: -5px; top: 4px; width: 9px; height: 9px; border: 1px solid #777; background: linear-gradient(#111, #111) center / 5px 1px no-repeat, linear-gradient(#111, #111) center / 1px 5px no-repeat, #fff; }
.value { flex: 1; display: flex; flex-direction: column; gap: 5px; }
.value input { width: 176px; height: 21px; margin-left: 12px; padding: 0 4px; background: #f4f4f3; border: 2px solid #b4b4b4; }
.foot { display: flex; justify-content: flex-end; margin-top: 5px; }
.close { display: flex; align-items: center; justify-content: center; gap: 6px; width: 67px; height: 28px; border: 1px solid #bbb; }
.marks { position: absolute; left: 0; top: 0; width: 100%; height: 100%; pointer-events: none; }
</style>
